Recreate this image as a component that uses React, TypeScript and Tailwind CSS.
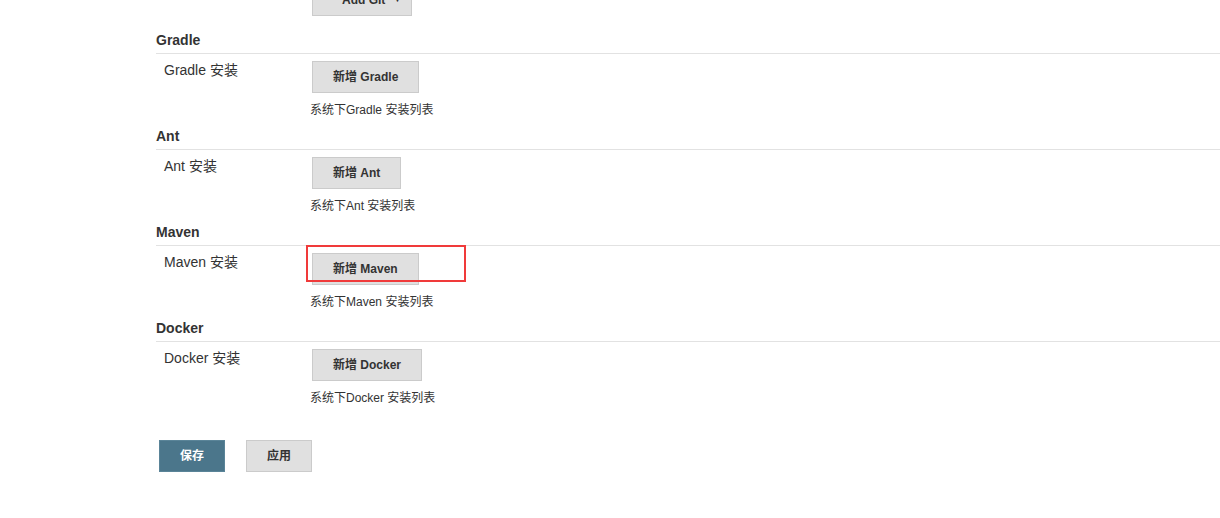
import React from 'react';

const FONT = { fontFamily: '"Liberation Sans", Arial, "Noto Sans CJK SC", sans-serif' };

interface ToolSectionProps {
  name: string;
  highlight?: boolean;
}

const ToolSection: React.FC<ToolSectionProps> = ({ name, highlight = false }) => {
  return (
    <div>
      {/* Section title */}
      <div className="pt-[8px] pb-[3px] border-b border-[#e2e2e2] text-[14px] leading-[20px] font-bold text-[#333]">
        {name}
      </div>

      {/* Installation row */}
      <div className="flex pt-[7px]">
        <div className="w-[156px] pl-2 mt-[-1px] text-[14px] leading-[20px] text-[#333] shrink-0">
          {name} 安装
        </div>
        <div>
          <div className="relative">
            <button className="h-[32px] px-[20px] bg-[#e0e0e0] border border-[#cbcbcb] text-[12px] font-bold text-[#333]">
              新增 {name}
            </button>
            {highlight && (
              <div className="absolute left-[-6px] top-[-8px] w-[160px] h-[37px] border-2 border-[#f03a3a] pointer-events-none" />
            )}
          </div>
          <div className="mt-[9px] ml-[-2px] text-[12px] leading-[16px] text-[#333]">
            系统下{name} 安装列表
          </div>
        </div>
      </div>
    </div>
  );
};

export default function App() {
  return (
    <div className="w-[1220px] h-[518px] bg-white overflow-hidden" style={FONT}>
      <div className="pl-[156px]">
        {/* Cut-off button from the section above */}
        <div className="pl-[156px] mt-[-17px]">
          <button className="h-[33px] w-[100px] bg-[#e0e0e0] border border-[#cbcbcb] text-[12px] font-bold text-[#333] flex items-center justify-between pl-[19px] pr-[9px]">
            <span className="pl-[10px]">Add Git</span>
            <span className="text-[9px]">▼</span>
          </button>
        </div>

        <div className="mt-[6px]">
          <ToolSection name="Gradle" />
          <ToolSection name="Ant" />
          <ToolSection name="Maven" highlight />
          <ToolSection name="Docker" />
        </div>

        {/* Footer actions */}
        <div className="flex gap-[21px] mt-[34px] pl-[3px]">
          <button className="h-[32px] w-[66px] bg-[#4b768b] border border-[#5a8498] text-white text-[12px] font-bold">
            保存
          </button>
          <button className="h-[32px] w-[66px] bg-[#e0e0e0] border border-[#cbcbcb] text-[#333] text-[12px] font-bold">
            应用
          </button>
        </div>
      </div>
    </div>
  );
}
